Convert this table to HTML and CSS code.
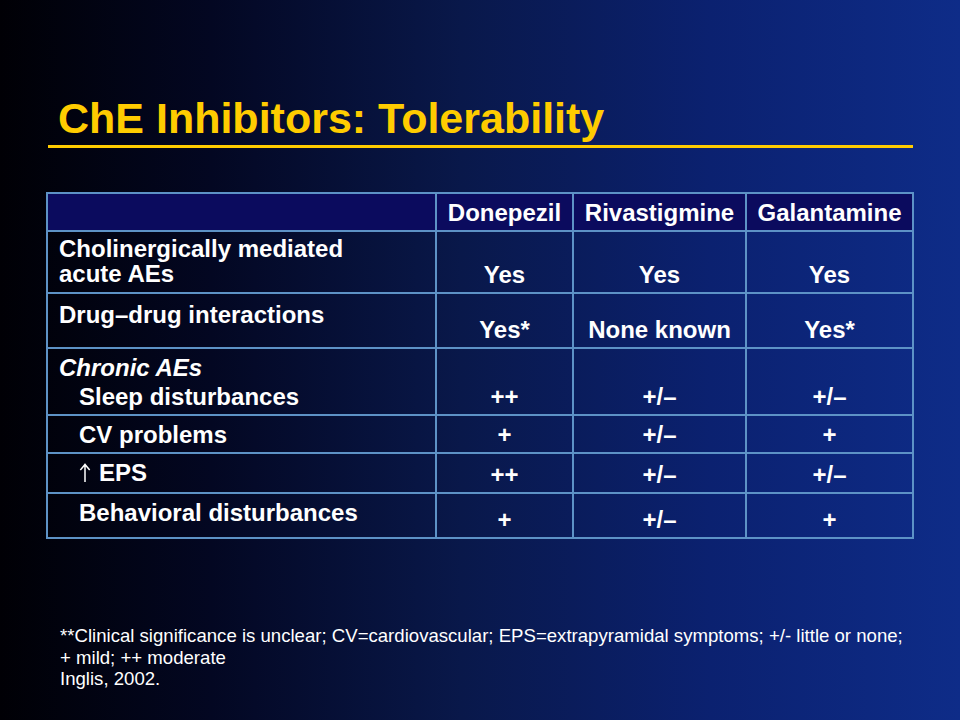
FILE: index.html
```html
<!DOCTYPE html>
<html>
<head>
<meta charset="utf-8">
<title>ChE Inhibitors: Tolerability</title>
<link rel="stylesheet" href="styles.css">
</head>
<body>
<div class="slide">
  <h1 class="title">ChE Inhibitors: Tolerability</h1>
  <div class="rule"></div>
  <table class="grid">
    <colgroup>
      <col class="c-label"><col class="c-don"><col class="c-riv"><col class="c-gal">
    </colgroup>
    <thead>
      <tr class="r-head"><th></th><th>Donepezil</th><th>Rivastigmine</th><th>Galantamine</th></tr>
    </thead>
    <tbody>
      <tr class="r1">
        <td class="label label-tight">Cholinergically mediated<br>acute AEs</td>
        <td class="val">Yes</td><td class="val">Yes</td><td class="val">Yes</td>
      </tr>
      <tr class="r2">
        <td class="label label-loose">Drug–drug interactions</td>
        <td class="val">Yes*</td><td class="val">None known</td><td class="val">Yes*</td>
      </tr>
      <tr class="r3">
        <td class="label"><div class="group"><em>Chronic AEs</em></div><div class="indent">Sleep disturbances</div></td>
        <td class="val">++</td><td class="val">+/–</td><td class="val">+/–</td>
      </tr>
      <tr class="r4">
        <td class="label"><div class="indent">CV problems</div></td>
        <td class="val">+</td><td class="val">+/–</td><td class="val">+</td>
      </tr>
      <tr class="r5">
        <td class="label"><div class="indent"><svg class="arrow" width="12" height="19" viewBox="0 0 12 19" aria-hidden="true"><path d="M6 1.5 V18.5 M1.8 6.5 L6 1.5 L10.2 6.5" fill="none" stroke="#fff" stroke-width="1.5" stroke-linecap="square"/></svg> EPS</div></td>
        <td class="val">++</td><td class="val">+/–</td><td class="val">+/–</td>
      </tr>
      <tr class="r6">
        <td class="label"><div class="indent">Behavioral disturbances</div></td>
        <td class="val">+</td><td class="val">+/–</td><td class="val">+</td>
      </tr>
    </tbody>
  </table>
  <p class="notes">**Clinical significance is unclear; CV=cardiovascular; EPS=extrapyramidal symptoms; +/- little or none;<br>+ mild; ++ moderate<br>Inglis, 2002.</p>
</div>
</body>
</html>
```
FILE: styles.css
```css
html, body {
  margin: 0;
  padding: 0;
  background: #000;
}

.slide {
  width: 960px;
  height: 720px;
  box-sizing: border-box;
  padding: 0 46px;
  overflow: hidden;
  background: linear-gradient(90deg, #000005 0%, #030722 22%, #09184a 48%, #0b2170 74%, #0e2c88 100%);
  font-family: "Liberation Sans", Arial, Helvetica, sans-serif;
  color: #fff;
}

.title {
  margin: 0;
  padding: 94px 0 0 12px;
  font-size: 43px;
  line-height: 48px;
  font-weight: bold;
  color: #ffcc00;
  white-space: nowrap;
}

.rule {
  margin: 3px 0 0 2px;
  width: 865px;
  height: 3px;
  background: #ffcc00;
}

.grid {
  margin-top: 44px;
  width: 866px;
  border-collapse: collapse;
  table-layout: fixed;
  font-size: 24px;
  font-weight: bold;
  line-height: 25px;
}

.c-label { width: 389px; }
.c-don { width: 137px; }
.c-riv { width: 173px; }
.c-gal { width: 167px; }

.grid th,
.grid td {
  border: 2px solid #5d92c6;
  padding: 0;
  white-space: nowrap;
}

.r-head th {
  background: #0b0b5e;
  text-align: center;
  vertical-align: middle;
  font-weight: bold;
}

.r-head { height: 38px; }
.r1 { height: 62px; }
.r2 { height: 55px; }
.r3 { height: 67px; }
.r4 { height: 38px; }
.r5 { height: 40px; }
.r6 { height: 45px; }

.label {
  text-align: left;
  vertical-align: top;
  padding: 6px 0 0 11px !important;
}

.label-tight { padding-top: 4px !important; }
.label-loose { padding-top: 8px !important; }

.group {
  margin-bottom: 4px;
}

.group em {
  font-style: italic;
}

.indent {
  padding-left: 20px;
  display: flex;
  align-items: center;
  gap: 8px;
}

.arrow {
  display: block;
  flex: none;
}

.val {
  text-align: center;
  vertical-align: bottom;
  padding-bottom: 5px !important;
}

.notes {
  margin: 86px 0 0 14px;
  font-size: 18.6px;
  line-height: 21.5px;
  white-space: nowrap;
}
```
